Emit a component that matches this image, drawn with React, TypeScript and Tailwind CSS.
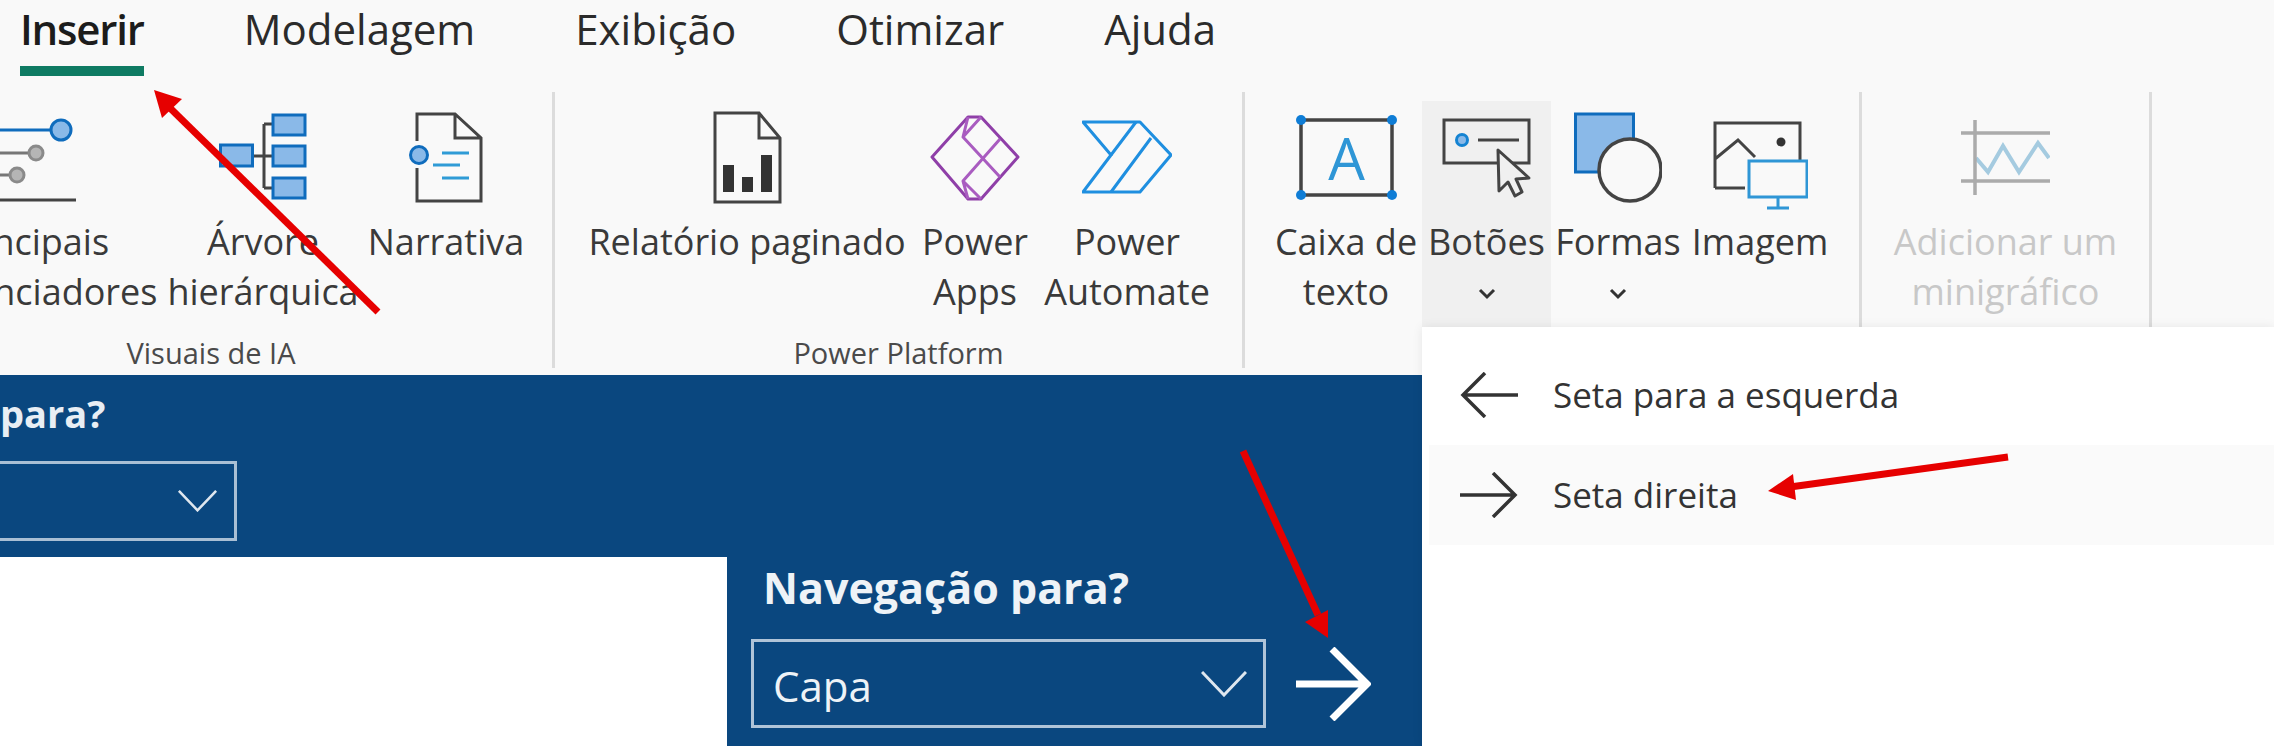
import React from 'react';

const DARK = '#444444';
const BLUE = '#0f6cbd';
const LIGHT = '#8ab9e8';

const TABS = ['Modelagem', 'Exibição', 'Otimizar', 'Ajuda'];

interface RibbonButtonProps {
  lines: string[];
  width: string;
  icon: React.ReactNode;
  chevron?: boolean;
  active?: boolean;
  disabled?: boolean;
}

const Chevron = () => (
  <svg width="18" height="12" viewBox="0 0 18 12" fill="none" stroke="#333" strokeWidth="3">
    <path d="M2 2l7 7 7-7" />
  </svg>
);

const RibbonButton: React.FC<RibbonButtonProps> = ({ lines, width, icon, chevron, active, disabled }) => (
  <div className={`flex flex-col items-center h-[226px] shrink-0 ${width} ${active ? 'bg-[#f0f0f0]' : ''}`}>
    <div className="h-[110px] flex justify-center">{icon}</div>
    <div className={`text-[36px] leading-[50px] mt-[6px] whitespace-nowrap text-center ${disabled ? 'text-[#c8c8c8]' : 'text-[#3a3a3a]'}`}>
      {lines.map((line) => (
        <div key={line}>{line}</div>
      ))}
      {chevron && (
        <div className="h-[50px] pt-[3px] flex items-center justify-center">
          <Chevron />
        </div>
      )}
    </div>
  </div>
);

const RibbonGroup: React.FC<{ label?: string; className: string; children: React.ReactNode }> = ({ label, className, children }) => (
  <div className={`flex flex-col h-[276px] pt-[9px] border-r-[3px] border-[#dcdcdc] shrink-0 ${className}`}>
    <div className="flex h-[226px]">{children}</div>
    {label && <div className="text-[29px] leading-[41px] pt-[5px] text-[#4a4a4a] text-center">{label}</div>}
  </div>
);

const InfluencersIcon = () => (
  <svg className="ml-[20px]" width="96" height="110" viewBox="0 0 96 110" fill="none" strokeWidth="3">
    <path d="M0 29H61" stroke={BLUE} />
    <circle cx="71" cy="29" r="10" fill={LIGHT} stroke={BLUE} />
    <path d="M0 52H39M0 74H21" stroke="#777" />
    <circle cx="46" cy="52" r="7" fill="#b5b5b5" stroke="#8a8a8a" />
    <circle cx="27" cy="74" r="7" fill="#b5b5b5" stroke="#8a8a8a" />
    <path d="M0 99H86" stroke={DARK} />
  </svg>
);

const TreeIcon = () => (
  <svg width="88" height="110" viewBox="0 0 88 110" fill="none" strokeWidth="3">
    <path d="M34 55H54M45 23V87M45 23H54M45 87H54" stroke={DARK} />
    <rect x="1.5" y="44" width="32" height="21" fill={LIGHT} stroke={BLUE} />
    <rect x="54" y="14" width="32" height="20" fill={LIGHT} stroke={BLUE} />
    <rect x="54" y="45" width="32" height="20" fill={LIGHT} stroke={BLUE} />
    <rect x="54" y="77" width="32" height="20" fill={LIGHT} stroke={BLUE} />
  </svg>
);

const NarrativeIcon = () => (
  <svg width="74" height="110" viewBox="0 0 74 110" fill="none" strokeWidth="3">
    <path d="M8 40V13H46L72 37V100H8V67M46 13V37H72" stroke={DARK} />
    <circle cx="10" cy="54" r="8.5" fill={LIGHT} stroke={BLUE} />
    <path d="M33 52H60M24 64H51M33 77H60" stroke="#2f9bd6" />
  </svg>
);

const PaginatedIcon = () => (
  <svg width="69" height="110" viewBox="0 0 69 110" fill="none" strokeWidth="3">
    <path d="M2 12H46L67 37V101H2ZM46 12V37H67" stroke={DARK} />
    <path d="M10 64H21V91H10ZM29 76H40V91H29ZM48 54H59V91H48Z" fill="#333" />
  </svg>
);

const PowerAppsIcon = () => (
  <svg width="90" height="110" viewBox="0 0 90 110" fill="none" strokeWidth="3" strokeLinejoin="round">
    <path d="M38 16L2 56L38 98H51L88 56L51 16Z" stroke="#8f3fa8" />
    <path d="M38 16L33 36L70 76M51 16L33 36M70 38L33 80L38 98M33 80L51 98" stroke="#a95cc0" />
  </svg>
);

const PowerAutomateIcon = () => (
  <svg width="90" height="110" viewBox="0 0 90 110" fill="none" strokeWidth="3" strokeLinejoin="round">
    <path d="M1 21H58L89 54L58 91H1L29 54Z" stroke="#1f8fe0" />
    <path d="M54 21L29 54M69 37L29 91" stroke="#1f8fe0" />
  </svg>
);

const TextBoxIcon = () => (
  <svg width="101" height="110" viewBox="0 0 101 110" fill="none">
    <rect x="5" y="19" width="91" height="75" stroke={DARK} strokeWidth="3.5" />
    <text x="50.5" y="79" textAnchor="middle" fontFamily="Open Sans" fontWeight="400" fontSize="58" fill="#2f96d6">A</text>
    {[[5, 19], [96, 19], [5, 94], [96, 94]].map(([cx, cy]) => (
      <circle key={`${cx}-${cy}`} cx={cx} cy={cy} r="5" fill="#0f7dd6" />
    ))}
  </svg>
);

const ButtonsIcon = () => (
  <svg width="89" height="110" viewBox="0 0 89 110" fill="none" strokeWidth="3">
    <path d="M2 19H87V62H2Z" stroke={DARK} />
    <circle cx="20" cy="39" r="5.5" fill={LIGHT} stroke="#1483d2" />
    <path d="M36 39H77" stroke={DARK} />
    <path d="M56 49L57 90L66 81L73 95L80 91L74 78L87 77Z" fill="#f0f0f0" stroke={DARK} strokeLinejoin="round" />
  </svg>
);

const ShapesIcon = () => (
  <svg width="88" height="110" viewBox="0 0 88 110" fill="none" strokeWidth="3">
    <rect x="1.5" y="13" width="58" height="58" fill={LIGHT} stroke={BLUE} />
    <circle cx="56" cy="69" r="31" fill="#f9f9f9" stroke={DARK} strokeWidth="3.5" />
  </svg>
);

const ImageIcon = () => (
  <svg width="95" height="110" viewBox="0 0 95 110" fill="none" strokeWidth="3">
    <path d="M2 87V22H87V60M2 87H32M2 58L25 39L42 56" stroke={DARK} />
    <circle cx="68" cy="41" r="4.5" fill="#333" />
    <path d="M36 60H94V96H36ZM65 96V106M54 107H76" stroke="#2f96d6" />
  </svg>
);

const SparklineIcon = () => (
  <svg width="89" height="110" viewBox="0 0 89 110" fill="none">
    <path d="M15 57L27 71L42 45L58 71L77 42L88 57" stroke="#a5cbe0" strokeWidth="4" />
    <path d="M0 32H89M0 80H89M14 19V94" stroke="#ababab" strokeWidth="3.5" />
  </svg>
);

const SelectChevron = ({ width, height }: { width: number; height: number }) => (
  <svg width={width} height={height} viewBox="0 0 46 26" fill="none" stroke="#dfe7ef" strokeWidth="3">
    <path d="M1 1L23 24L45 1" />
  </svg>
);

const RedArrow: React.FC<{ d: string; head: string }> = ({ d, head }) => (
  <>
    <path d={d} stroke="#e60000" strokeWidth="7" fill="none" />
    <polygon points={head} fill="#e60000" />
  </>
);

export default function App() {
  return (
    <div className="relative w-[2274px] h-[746px] overflow-hidden bg-white font-['Open_Sans',sans-serif]">
      <div className="h-[375px] bg-[#f9f9f9]">
        <div className="flex h-[76px] pl-[20px] gap-[100px] text-[42px] text-[#2b2b2b]">
          <div className="relative font-semibold text-[#1c1c1c] leading-[58px] tracking-[-1.2px]">
            Inserir
            <div className="absolute left-0 right-0 top-[66px] h-[10px] bg-[#0f7b63]" />
          </div>
          {TABS.map((tab) => (
            <div key={tab} className="leading-[58px]">{tab}</div>
          ))}
        </div>

        <div className="flex pt-[16px]">
          <RibbonGroup label="Visuais de IA" className="w-[685px] ml-[-130px]">
            <div className="w-[8px]" />
            <RibbonButton lines={['Principais', 'influenciadores']} width="w-[300px]" icon={<InfluencersIcon />} />
            <RibbonButton lines={['Árvore', 'hierárquica']} width="w-[170px]" icon={<TreeIcon />} />
            <RibbonButton lines={['Narrativa']} width="w-[196px]" icon={<NarrativeIcon />} />
          </RibbonGroup>
          <RibbonGroup label="Power Platform" className="w-[690px]">
            <div className="w-[22px]" />
            <RibbonButton lines={['Relatório paginado']} width="w-[340px]" icon={<PaginatedIcon />} />
            <RibbonButton lines={['Power', 'Apps']} width="w-[116px]" icon={<PowerAppsIcon />} />
            <RibbonButton lines={['Power', 'Automate']} width="w-[188px]" icon={<PowerAutomateIcon />} />
          </RibbonGroup>
          <RibbonGroup className="w-[617px]">
            <div className="w-[25px]" />
            <RibbonButton lines={['Caixa de', 'texto']} width="w-[152px]" icon={<TextBoxIcon />} />
            <RibbonButton lines={['Botões']} width="w-[129px]" icon={<ButtonsIcon />} chevron active />
            <RibbonButton lines={['Formas']} width="w-[134px]" icon={<ShapesIcon />} chevron />
            <RibbonButton lines={['Imagem']} width="w-[150px]" icon={<ImageIcon />} />
          </RibbonGroup>
          <RibbonGroup className="w-[290px]">
            <RibbonButton lines={['Adicionar um', 'minigráfico']} width="w-[287px]" icon={<SparklineIcon />} disabled />
          </RibbonGroup>
        </div>
      </div>

      <div className="w-[1422px] h-[182px] bg-[#0a477f] pt-[18px]">
        <div className="text-[38px] leading-[40px] font-bold text-[#e8eef4]">para?</div>
        <div className="mt-[28px] w-[237px] h-[80px] border-[3px] border-l-0 border-[#a9bfd4] flex items-center justify-end pr-[16px]">
          <SelectChevron width={41} height={22} />
        </div>
      </div>

      <div className="ml-[727px] w-[695px] h-[189px] bg-[#0a477f] pl-[24px] pt-[6px]">
        <div className="pl-[12px] text-[43px] leading-[50px] font-bold text-[#eef3f7]">Navegação para?</div>
        <div className="flex items-center mt-[26px]">
          <div className="w-[515px] h-[89px] border-[3px] border-[#b0c4d8] flex items-center justify-between pl-[19px] pr-[16px] text-[42px] text-[#eef3f7]">
            <span className="pt-[3px]">Capa</span>
            <SelectChevron width={46} height={26} />
          </div>
          <svg className="ml-[30px]" width="75" height="74" viewBox="0 0 75 74" fill="none" stroke="#ffffff" strokeWidth="7">
            <path d="M0 37H70M36 2L71 37L36 72" />
          </svg>
        </div>
      </div>

      {/* botões dropdown */}
      <div className="absolute left-[1422px] right-0 top-[327px] bottom-0 bg-white shadow-[0_0_10px_rgba(0,0,0,0.08)]">
        <div className="h-[118px] flex items-center pl-[38px] pt-[18px] gap-[35px] text-[35px] text-[#333]">
          <svg width="58" height="46" viewBox="0 0 58 46" fill="none" stroke="#333" strokeWidth="3.5">
            <path d="M58 23H3M25 1L3 23L25 45" />
          </svg>
          <span>Seta para a esquerda</span>
        </div>
        <div className="h-[100px] ml-[7px] flex items-center pl-[31px] gap-[35px] bg-[#fafafa] text-[35px] text-[#333]">
          <svg width="58" height="46" viewBox="0 0 58 46" fill="none" stroke="#333" strokeWidth="3.5">
            <path d="M0 23H55M33 1L55 23L33 45" />
          </svg>
          <span>Seta direita</span>
        </div>
      </div>

      {/* setas vermelhas */}
      <svg className="absolute inset-0 pointer-events-none" width="2274" height="746" viewBox="0 0 2274 746">
        <RedArrow d="M378 312L170 108" head="154,90 182,99 162,118" />
        <RedArrow d="M1243 451L1318 615" head="1328,638 1305,622 1328,610" />
        <RedArrow d="M2008 457L1790 487" head="1768,491 1793,474 1796,500" />
      </svg>
    </div>
  );
}
